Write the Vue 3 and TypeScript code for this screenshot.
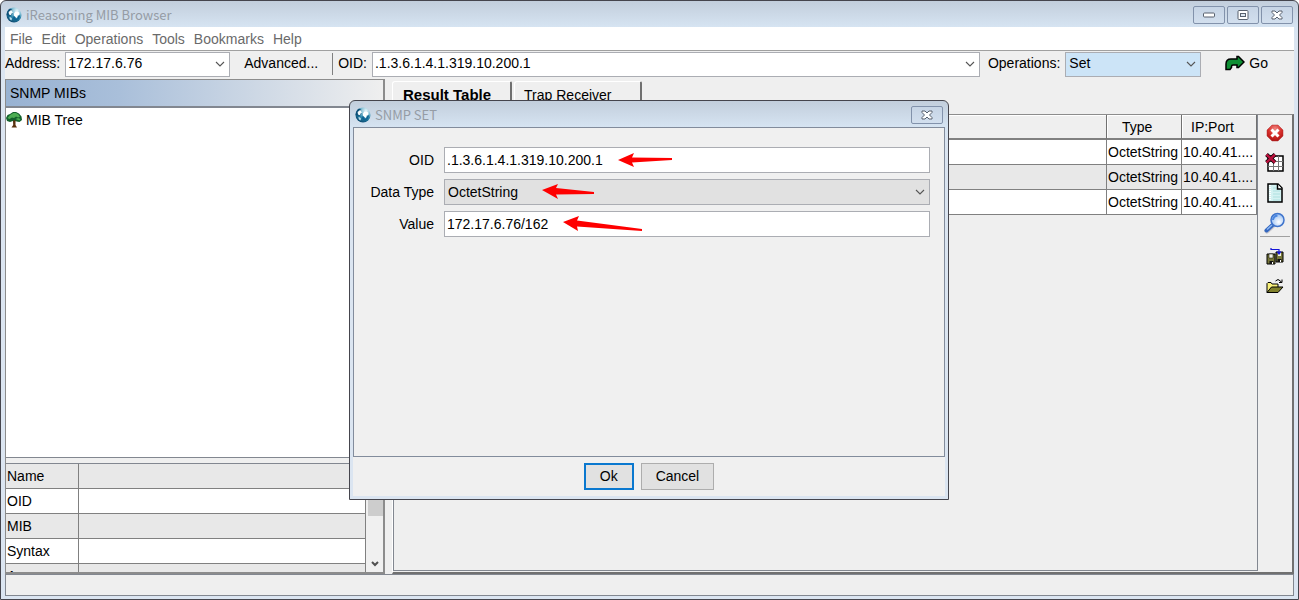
<script setup lang="ts">
import { ref } from 'vue'

interface TrapRow {
  type: string
  port: string
}

const menus: string[] = ['File', 'Edit', 'Operations', 'Tools', 'Bookmarks', 'Help']
const address = ref('172.17.6.76')
const oid = ref('.1.3.6.1.4.1.319.10.200.1')
const operation = ref('Set')
const dialogOid = ref('.1.3.6.1.4.1.319.10.200.1')
const dataType = ref('OctetString')
const value = ref('172.17.6.76/162')
const rows: TrapRow[] = [
  { type: 'OctetString', port: '10.40.41....' },
  { type: 'OctetString', port: '10.40.41....' },
  { type: 'OctetString', port: '10.40.41....' },
]
const props: string[] = ['Name', 'OID', 'MIB', 'Syntax', 'Access']
</script>

<template>
  <div class="window">
    <svg class="defs" width="0" height="0" aria-hidden="true">
      <defs>
        <radialGradient id="sea" cx="0.7" cy="0.2" r="0.85">
          <stop offset="0" stop-color="#e4f3f8" />
          <stop offset="0.35" stop-color="#8cc4d8" />
          <stop offset="0.65" stop-color="#2482a8" />
          <stop offset="1" stop-color="#0c4a70" />
        </radialGradient>
        <radialGradient id="red" cx="0.5" cy="0.25" r="0.8">
          <stop offset="0" stop-color="#f08a84" />
          <stop offset="0.5" stop-color="#d8302c" />
          <stop offset="1" stop-color="#a80f10" />
        </radialGradient>
        <radialGradient id="lens" cx="0.6" cy="0.65" r="0.7">
          <stop offset="0" stop-color="#ffffff" />
          <stop offset="1" stop-color="#86b4f0" />
        </radialGradient>
        <symbol id="globe" viewBox="0 0 16 16">
          <circle cx="8" cy="8" r="7.5" fill="url(#sea)" />
          <path d="M0.600 8C0.600 5 2 2.800 4 1.600L6.500 3 5.500 5l1 1.500-2 2.500z" fill="#0d5078" />
          <path d="M2.600 5l2.200-1.800 1.800.2-.6 1.400 1 .8-1.400.8-.6 1.800L3 7.400z" fill="#f4fafc" />
          <path d="M8 6.600l1.400-2 2.400-.2 1.600 1.400-.2 2-1.400.4-.6 2-1.200 1-1-1.800-1-.6z" fill="#fff" />
          <path d="M7.500 9l2 1.200.2 1.800 1.600-.4.8-2.400 2-1.200c-.2 3-2 5-4.600 5.600L7 12z" fill="#0f6290" />
          <path d="M3.400 10l1.800.4.8 1.400-.6 1.600-1.600-1.200z" fill="#bfe0ee" />
        </symbol>
        <symbol id="cross" viewBox="0 0 12 10">
          <path d="M1 1h3l2 2 2-2h3v1.500L8.500 5 11 7.500V9H8L6 7 4 9H1V7.500L3.500 5 1 2.500z" fill="#fff" stroke="#58616e" />
        </symbol>
        <symbol id="chevron" viewBox="0 0 10 6">
          <path d="M1 1l4 4 4-4" fill="none" stroke="#555" stroke-width="1.1" />
        </symbol>
      </defs>
    </svg>

    <header class="titlebar">
      <svg class="globe"><use href="#globe" /></svg>
      <h1>iReasoning MIB Browser</h1>
      <div class="winbtns">
        <button class="winbtn" aria-label="Minimize">
          <svg width="12" height="6"><rect x="0.500" y="1" width="11" height="4" rx="1" fill="#fff" stroke="#58616e" /></svg>
        </button>
        <button class="winbtn" aria-label="Restore">
          <svg width="12" height="10">
            <rect x="1" y="0.500" width="10" height="9" rx="1" fill="#fff" stroke="#58616e" />
            <rect x="3.500" y="3.500" width="5" height="3" fill="#dce6f0" stroke="#58616e" />
          </svg>
        </button>
        <button class="winbtn" aria-label="Close"><svg width="12" height="10"><use href="#cross" /></svg></button>
      </div>
    </header>

    <nav class="menubar">
      <button v-for="m in menus" :key="m">{{ m }}</button>
    </nav>

    <div class="toolbar">
      <label for="address">Address:</label>
      <div class="combo address">
        <input id="address" v-model="address" type="text" />
        <svg class="chev" width="10" height="6"><use href="#chevron" /></svg>
      </div>
      <button class="advanced">Advanced...</button>
      <label class="oid-label" for="oid">OID:</label>
      <div class="combo oid">
        <input id="oid" v-model="oid" type="text" />
        <svg class="chev" width="10" height="6"><use href="#chevron" /></svg>
      </div>
      <label class="op-label" for="operation">Operations:</label>
      <div class="combo operation">
        <select id="operation" v-model="operation"><option>Set</option></select>
        <svg class="chev" width="10" height="6"><use href="#chevron" /></svg>
      </div>
      <button class="go">
        <svg width="20" height="16" viewBox="0 0 20 16">
          <path d="M1 14.500V9q0-5 5-5h6V1.500h1.500L19 7l-5.500 5.500H12V10H8q-1.500 0-1.500 1.500v1L5 14.500z" fill="#0f8f34" stroke="#000" stroke-width="1.500" />
        </svg>
        <span>Go</span>
      </button>
    </div>

    <main class="body">
      <section class="left">
        <h2>SNMP MIBs</h2>
        <div class="tree">
          <div class="node">
            <svg width="16" height="16" viewBox="0 0 16 16">
              <path d="M7 9l-2-1 .5-1L7.500 8h1.500l2-1.500.6.8L9.500 9.500V13l1.500 2.500H5.500L7.200 13z" fill="#5a3210" />
              <path d="M4 2l3-2h3l3 1.500 2.500 3L16 8l-2.500 2-3-.5L8.500 8 7 9l-3 1-3-1L0 6l1.500-3z" fill="#12602c" />
              <path d="M4 3l3.500-2h2.500l2.500 1.500 1.500 2.500-2 .5-2-1-2 1.500-2-.5-2.500 1.500-2-1zM9.500 7l2.500-1 2.500 1-1 1.500z" fill="#4cae52" />
            </svg>
            <span>MIB Tree</span>
          </div>
        </div>
        <div class="props">
          <div class="props-view">
            <table>
              <tbody>
                <tr v-for="p in props" :key="p"><th scope="row">{{ p }}</th><td></td></tr>
              </tbody>
            </table>
          </div>
          <div class="scroll">
            <div class="thumb"></div>
            <svg width="8" height="6" viewBox="0 0 8 6"><path d="M1 1l3 3 3-3" fill="none" stroke="#505050" stroke-width="2" /></svg>
          </div>
        </div>
      </section>

      <section class="right">
        <div class="tabs" role="tablist">
          <button class="tab active" role="tab" aria-selected="true">Result Table</button>
          <button class="tab" role="tab" aria-selected="false">Trap Receiver</button>
        </div>
        <div class="pane">
          <div class="results">
            <table>
              <colgroup><col /><col class="c-type" /><col class="c-port" /></colgroup>
              <thead>
                <tr><th></th><th>Type</th><th>IP:Port</th></tr>
              </thead>
              <tbody>
                <tr v-for="(r, i) in rows" :key="i"><td></td><td>{{ r.type }}</td><td>{{ r.port }}</td></tr>
              </tbody>
            </table>
          </div>
          <aside class="side">
            <button aria-label="Stop">
              <svg width="18" height="18" viewBox="0 0 18 18">
                <path d="M6 1h6l5 5v6l-5 5H6l-5-5V6z" fill="url(#red)" stroke="#b03030" stroke-width="0.500" />
                <path d="M5.500 5.500l7 7m0-7l-7 7" stroke="#fff" stroke-width="3" />
              </svg>
            </button>
            <button aria-label="Clear table">
              <svg width="20" height="20" viewBox="0 0 20 20">
                <rect x="3" y="3" width="15" height="15" fill="#fff" stroke="#000" stroke-width="1.500" />
                <path d="M8.500 3v15M13.500 3v15M3 8.500h15M3 13.500h15" stroke="#777" />
                <path d="M1.500 1.500l8.500 8m0-8l-8.500 8" stroke="#000" stroke-width="4" />
                <path d="M1.500 1.500l8.500 8m0-8l-8.500 8" stroke="#b8103c" stroke-width="2.500" />
              </svg>
            </button>
            <button aria-label="New document">
              <svg width="18" height="20" viewBox="0 0 18 20">
                <path d="M2 1h10l4 4v14H2z" fill="#d4f2f2" stroke="#000" stroke-width="1.500" />
                <path d="M4 2v16" stroke="#fff" stroke-width="2" stroke-dasharray="1 1" />
                <path d="M11.500 1v5H16" fill="#fff" stroke="#000" stroke-width="1.500" />
                <path d="M7 5h3M7 8h7M7 11h7M7 14h7M7 17h7" stroke="#aee0e0" />
              </svg>
            </button>
            <button aria-label="Find">
              <svg width="22" height="22" viewBox="0 0 22 22">
                <path d="M3 19l6-5.500" stroke="#c4c4cc" stroke-width="5" stroke-linecap="round" />
                <path d="M2.500 18.500l6-5.500" stroke="#3468c0" stroke-width="4" stroke-linecap="round" />
                <path d="M3 17.500l5-4.500" stroke="#8cb8f4" stroke-width="1.500" />
                <circle cx="13.500" cy="8" r="6.500" fill="url(#lens)" stroke="#3f74cc" stroke-width="1.500" />
                <path d="M9 8q.5-4 4.500-4.500" fill="none" stroke="#4a86e0" stroke-width="2" />
              </svg>
            </button>
            <hr />
            <button aria-label="Save session">
              <svg width="18" height="18" viewBox="0 0 18 18">
                <path d="M1 7h8v10H1z" fill="#77773a" stroke="#000" />
                <path d="M3 7h4v4H3z" fill="#f2f2e4" stroke="#000" stroke-width="0.500" />
                <path d="M3.500 14h4v3h-4z" fill="#111" /><path d="M6 15h1v2H6z" fill="#fff" />
                <path d="M10 5h7v10h-7z" fill="#77773a" stroke="#000" />
                <path d="M12 5h3v4h-3z" fill="#f2f2e4" /><path d="M11.500 12h4v3h-4z" fill="#111" /><path d="M14 13h1v2h-1z" fill="#fff" />
                <path d="M5 1v1.500h8V6M11 4.500l2 2.500 2-2.500" fill="none" stroke="#1414d8" stroke-width="1.200" />
              </svg>
            </button>
            <button aria-label="Open session">
              <svg width="18" height="16" viewBox="0 0 18 16">
                <path d="M1 14.500V5.500l1-1h3l1 1.500h6v3" fill="#f8f07a" stroke="#000" />
                <path d="M1 14.500L5.500 9H17l-5 5.500z" fill="#80802a" stroke="#000" />
                <path d="M9.500 3q2.500-3 5 0l1 1.500M16 1.500v3h-3" fill="none" stroke="#000" />
              </svg>
            </button>
          </aside>
        </div>
      </section>
    </main>

    <footer class="status"></footer>

    <div class="overlay">
      <form class="dialog" role="dialog" aria-labelledby="dialog-title" @submit.prevent>
        <div class="dialog-title">
          <svg class="globe"><use href="#globe" /></svg>
          <h2 id="dialog-title">SNMP SET</h2>
          <button type="button" class="winbtn" aria-label="Close"><svg width="12" height="10"><use href="#cross" /></svg></button>
        </div>
        <div class="fields">
          <label for="d-oid">OID</label>
          <div class="field">
            <input id="d-oid" v-model="dialogOid" type="text" />
            <svg class="arrow a-oid" width="56" height="16" viewBox="0 0 56 16">
              <path d="M0 8L16 1l-2 4.500L54 6v2L14 10.500 16 15z" fill="#fe0000" />
            </svg>
          </div>
          <label for="d-type">Data Type</label>
          <div class="field">
            <select id="d-type" v-model="dataType"><option>OctetString</option></select>
            <svg class="chev" width="10" height="6"><use href="#chevron" /></svg>
            <svg class="arrow a-type" width="56" height="16" viewBox="0 0 56 16">
              <path d="M0 6L16 0l-2 4L52 8v2L14 10.500 16 15z" fill="#fe0000" />
            </svg>
          </div>
          <label for="d-value">Value</label>
          <div class="field">
            <input id="d-value" v-model="value" type="text" />
            <svg class="arrow a-value" width="80" height="16" viewBox="0 0 80 16">
              <path d="M0 6L16 0l-2 4.500L79 13v2L14 10.500 15 15z" fill="#fe0000" />
            </svg>
          </div>
        </div>
        <div class="actions">
          <button type="submit" class="btn ok">Ok</button>
          <button type="button" class="btn">Cancel</button>
        </div>
      </form>
    </div>
  </div>
</template>

<style>
body {
  margin: 0;
}
</style>

<style scoped>
* {
  box-sizing: border-box;
}
.window {
  position: relative;
  display: flex;
  flex-direction: column;
  min-height: 100vh;
  padding: 0 4px 3px;
  border: 1px solid #45454d;
  border-radius: 6px 6px 0 0;
  background: linear-gradient(#c2cedc, #d6e4f2 26px, #dbe5f1 40px);
  color: #000;
  font: 14px/16px "Liberation Sans", Arial, sans-serif;
}
.defs {
  position: absolute;
}
button,
input,
select {
  margin: 0;
  padding: 0;
  border: 0;
  border-radius: 0;
  outline: 0;
  background: none;
  color: inherit;
  font: inherit;
}
select {
  appearance: none;
}
svg {
  display: block;
  flex: none;
}
h1,
h2 {
  margin: 0;
  font-weight: normal;
}
.titlebar,
.dialog-title {
  display: flex;
  align-items: center;
  height: 26px;
}
.titlebar {
  padding: 2px 1px 0;
}
.globe {
  width: 16px;
  height: 16px;
}
.titlebar h1,
.dialog-title h2 {
  flex: 1;
  margin-left: 4px;
  color: #959ca5;
  font: 13px/18px "Noto Sans CJK SC", "Noto Sans", sans-serif;
}
.winbtns {
  display: flex;
  gap: 2px;
}
.winbtn {
  display: flex;
  align-items: center;
  justify-content: center;
  width: 32px;
  height: 18px;
  border: 1px solid #8292ab;
  border-radius: 2px;
  background: linear-gradient(#c6d4e5, #d2dfee);
}
.menubar {
  display: flex;
  gap: 9px;
  height: 24px;
  padding: 1px 5px 0;
  border-bottom: 1px solid #a0a0a0;
  background: #fff;
  color: #6a6a6a;
}
.toolbar {
  display: flex;
  align-items: center;
  height: 28px;
  padding-bottom: 2px;
  background: #efefef;
}
.combo {
  display: flex;
  align-items: center;
  height: 25px;
  margin-left: 5px;
  padding-right: 4px;
  border: 1px solid #abadb3;
  background: #fff;
}
.combo input,
.combo select {
  flex: 1;
  min-width: 0;
  height: 100%;
  padding: 0 0 2px 2px;
}
.combo select {
  padding-left: 3px;
}
.toolbar label,
.toolbar > button {
  padding-bottom: 2px;
}
.address {
  width: 165px;
}
.advanced {
  margin-left: 14px;
}
.toolbar .oid-label {
  margin-left: 14px;
  padding: 2px 0 4px 5px;
  border-left: 1px solid #808080;
}
.oid {
  flex: 1;
}
.op-label {
  margin-left: 8px;
}
.operation {
  width: 136px;
  background: #cce4f7;
}
.go {
  display: flex;
  align-items: center;
  gap: 4px;
  margin: 0 26px 0 24px;
}
.body {
  display: flex;
  flex: 1;
  gap: 7px;
  background: #efefef;
}
.left {
  display: flex;
  flex-direction: column;
  flex: 0 0 30%;
  max-width: 380px;
  border: 1px solid #8c8c8c;
  border-right: 2px solid #8c8c8c;
  border-bottom: 2px solid #8c8c8c;
}
.left h2 {
  height: 28px;
  padding: 0 4px;
  border-bottom: 2px solid #828790;
  background: linear-gradient(90deg, #98b2d2, #a9bfda 30%, #efefef);
  font-size: 14px;
  line-height: 26px;
}
.tree {
  flex: 1;
  padding-top: 4px;
  border-bottom: 1px solid #828790;
  background: #fff;
}
.node {
  display: flex;
  align-items: center;
  gap: 4px;
}
.props {
  display: flex;
  height: 109px;
  margin-top: 5px;
  border-top: 1px solid #828790;
}
.props-view {
  flex: 1;
  overflow: hidden;
}
table {
  width: 100%;
  border-collapse: separate;
  border-spacing: 0;
  table-layout: fixed;
}
th,
td {
  height: 25px;
  padding: 0 1px;
  border-right: 1px solid #808080;
  border-bottom: 1px solid #808080;
  font-weight: normal;
  text-align: left;
  white-space: nowrap;
  overflow: hidden;
}
.props th {
  width: 73px;
}
.props tr {
  background: #fff;
}
.props tr:nth-child(odd) {
  background: #e8e8e8;
}
.scroll {
  display: flex;
  flex-direction: column;
  align-items: center;
  justify-content: space-between;
  width: 17px;
  padding: 17px 0 5px 1px;
  background: #f0f0f0;
}
.thumb {
  width: 15px;
  height: 35px;
  background: #cdcdcd;
}
.right {
  display: flex;
  flex: 1;
  flex-direction: column;
  min-width: 0;
  padding-top: 2px;
}
.tabs {
  display: flex;
  gap: 2px;
  height: 33px;
}
.tab {
  padding: 0 29px 6px 9px;
  border-top: 1px solid #fff;
  border-left: 1px solid #fff;
  border-right: 2px solid #707070;
  border-radius: 3px 2px 0 0;
}
.tab.active {
  padding-left: 10px;
  padding-right: 19px;
  font-size: 15px;
  font-weight: bold;
}
.pane {
  display: flex;
  flex: 1;
  border-top: 1px solid #8c8c8c;
  border-left: 1px solid #fff;
  border-right: 2px solid #707070;
  border-bottom: 2px solid #707070;
}
.results {
  flex: 1;
  margin-bottom: 1px;
  border: 1px solid #828790;
  border-top: 0;
}
.c-type,
.c-port {
  width: 75px;
}
.results thead th {
  border-right-color: #707070;
  border-bottom: 2px solid #808080;
  box-shadow: inset 1px 1px #fff;
  padding-left: 9px;
}
.results thead th:nth-child(2) {
  padding-left: 15px;
}
.results tbody tr {
  background: #fff;
}
.results tbody tr:nth-child(2) {
  background: #e8e8e8;
}
.side {
  display: flex;
  flex-direction: column;
  align-items: center;
  width: 34px;
  padding-top: 3px;
}
.side button {
  display: grid;
  place-items: center;
  width: 30px;
  height: 30px;
}
.side hr {
  width: 30px;
  margin: -2px 0 4px;
  border: 0;
  border-top: 1px solid #a0a0a0;
}
.status {
  height: 22px;
  border: 1px solid #828790;
  background: #efefef;
}
.overlay {
  position: absolute;
  inset: 0 1px 0 0;
  display: grid;
  place-items: center;
}
.dialog {
  width: 600px;
  padding: 0 3px 3px;
  border: 1px solid #45454d;
  border-radius: 6px 6px 0 0;
  background: linear-gradient(#c2cedc, #d6e4f2 26px, #dbe5f1 40px);
}
.dialog-title {
  padding: 2px 2px 0;
}
.fields {
  display: grid;
  grid-template-columns: 80px 1fr;
  grid-auto-rows: 26px;
  gap: 6px 10px;
  align-content: start;
  align-items: center;
  min-height: 330px;
  padding: 19px 14px 19px 0;
  border: 1px solid #828c9c;
  background: #f0f0f0;
}
.fields label {
  text-align: right;
}
.field {
  position: relative;
  height: 26px;
}
.field input,
.field select {
  display: block;
  width: 100%;
  height: 26px;
  padding: 0 3px;
  border: 1px solid #abadb3;
  background: #fff;
}
.field input {
  padding-left: 2px;
}
.field select {
  background: #e1e1e1;
}
.field .chev {
  position: absolute;
  top: 10px;
  right: 5px;
}
.arrow {
  position: absolute;
}
.a-oid {
  top: 5px;
  left: 174px;
}
.a-type {
  top: 5px;
  left: 98px;
}
.a-value {
  top: 5px;
  left: 119px;
}
.actions {
  display: flex;
  justify-content: center;
  gap: 7px;
  padding: 6px 0;
  background: #f0f0f0;
}
.btn {
  height: 27px;
  padding: 0 14px 1px;
  border: 1px solid #adadad;
  background: #e1e1e1;
}
.ok {
  border: 2px solid #0a78cf;
}
</style>
